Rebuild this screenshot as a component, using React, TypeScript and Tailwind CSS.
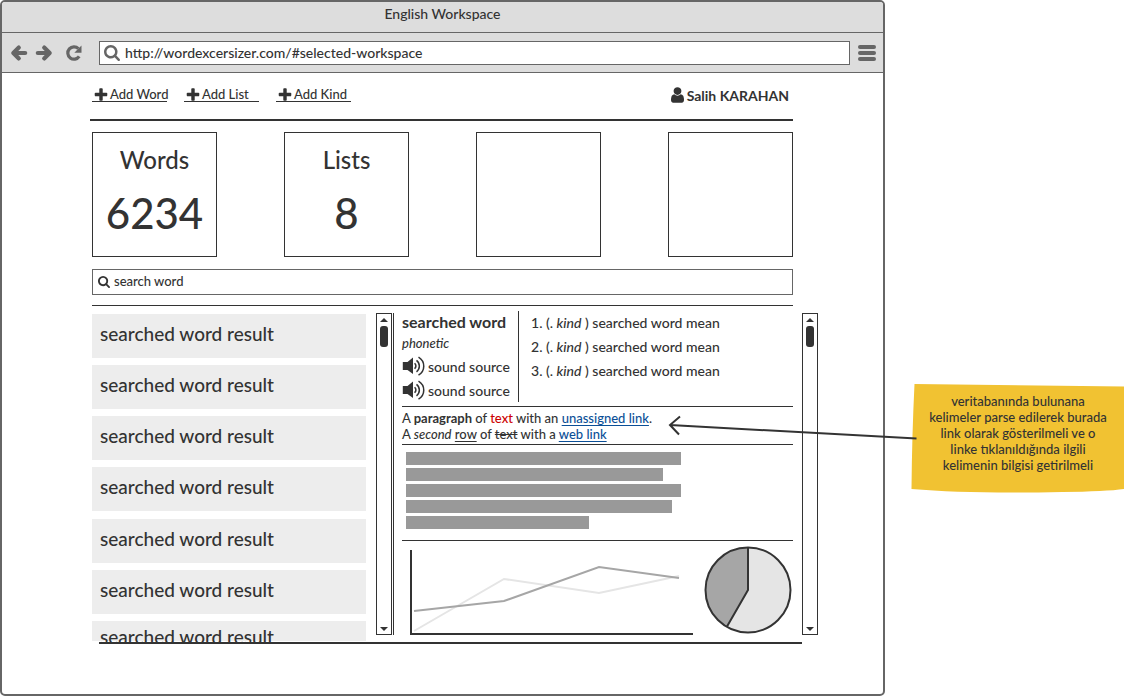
import React from "react";

const PLUS =
  "M1600 736v192q0 40-28 68t-68 28h-416v416q0 40-28 68t-68 28h-192q-40 0-68-28t-28-68v-416h-416q-40 0-68-28t-28-68v-192q0-40 28-68t68-28h416v-416q0-40 28-68t68-28h192q40 0 68 28t28 68v416h416q40 0 68 28t28 68z";
const USER =
  "M1536 1399q0 109-62.5 187t-150.5 78h-854q-88 0-150.5-78t-62.5-187q0-85 8.5-160.5t31.5-152 58.5-131 94-89 134.5-34.5q131 128 313 128t313-128q76 0 134.5 34.5t94 89 58.5 131 31.5 152 8.5 160.5zm-256-887q0 159-112.5 271.5t-271.5 112.5-271.5-112.5-112.5-271.5 112.5-271.5 271.5-112.5 271.5 112.5 112.5 271.5z";
const SEARCH =
  "M1216 832q0-185-131.5-316.5t-316.5-131.5-316.5 131.5-131.5 316.5 131.5 316.5 316.5 131.5 316.5-131.5 131.5-316.5zm512 832q0 52-38 90t-90 38q-54 0-90-38l-343-342q-179 124-399 124-143 0-273.5-55.5t-225-150-150-225-55.5-273.5 55.5-273.5 150-225 225-150 273.5-55.5 273.5 55.5 225 150 150 225 55.5 273.5q0 220-124 399l343 343q37 37 37 90z";

function Glyph({ d, viewBox = "0 0 1792 1792", className }: { d: string; viewBox?: string; className: string }) {
  return (
    <svg viewBox={viewBox} fill="currentColor" className={className} aria-hidden="true">
      <path d={d} />
    </svg>
  );
}

function ArrowIcon({ flip = false }: { flip?: boolean }) {
  return (
    <svg viewBox="0 0 18 18" className={flip ? "size-[18px] rotate-180" : "size-[18px]"} aria-hidden="true">
      <path
        d="M8.800 3.600 3.300 9l5.500 5.400M4 9h11.200"
        fill="none"
        stroke="currentColor"
        strokeWidth="4.200"
        strokeLinecap="round"
        strokeLinejoin="round"
      />
    </svg>
  );
}

function ReloadIcon() {
  return (
    <svg viewBox="0 0 18 18" className="size-[18px]" aria-hidden="true">
      <path d="M15.200 12.400A6.200 6.200 0 1 1 14.400 4.600" fill="none" stroke="currentColor" strokeWidth="3.200" />
      <path d="M17.500 1.500v7.200h-7.200z" fill="currentColor" />
    </svg>
  );
}

function SoundIcon() {
  return (
    <svg viewBox="0 0 24 20" className="h-5 w-6 shrink-0" aria-hidden="true">
      <path d="M.8 6h4.700l5.500-4.500v16.500l-5.500-4H.8z" fill="currentColor" />
      <g fill="none" stroke="currentColor" strokeWidth="1.500">
        <path d="M12.600 7.200q2.600 2.600 0 5.600" />
        <path d="M14.500 4.300c3.800 2.900 3.800 8.600 0 11.500" />
        <path d="M16.500 1.200c7 4.300 7 13.600 0 17.900" />
      </g>
    </svg>
  );
}

function Scrollbar() {
  return (
    <div className="mt-[7px] flex h-[322px] w-4 shrink-0 flex-col items-center border border-[#333] bg-white">
      <button aria-label="Scroll up" className="flex h-3 w-full items-center justify-center">
        <svg viewBox="0 0 8 4" className="h-1 w-2">
          <path d="M0 4 4 0l4 4z" fill="#333" />
        </svg>
      </button>
      <div className="h-[21px] w-2 rounded-[3px] bg-[#333]" />
      <button aria-label="Scroll down" className="mt-auto flex h-[10px] w-full items-center justify-center">
        <svg viewBox="0 0 8 4" className="h-1 w-2">
          <path d="M0 0h8L4 4z" fill="#333" />
        </svg>
      </button>
    </div>
  );
}

function AddLink({ label }: { label: string }) {
  return (
    <a href="#add" className="flex h-[14px] w-[75px] items-center border-b border-[#333] pl-px whitespace-nowrap">
      <Glyph d={PLUS} className="mr-px size-4 shrink-0" />
      {label}
    </a>
  );
}

function Stat({ title, value }: { title?: string; value?: string }) {
  return (
    <div className="flex size-[125px] flex-col items-center border border-[#333] pt-[11px]">
      {title && <h2 className="text-[24px] leading-8">{title}</h2>}
      {value && <p className="pt-[13px] text-[42px] leading-[48px]">{value}</p>}
    </div>
  );
}

function Sound() {
  return (
    <button className="flex h-6 items-center gap-[2px] text-[14px]">
      <SoundIcon />
      sound source
    </button>
  );
}

const results = [1, 2, 3, 4, 5, 6];
const meanings = [1, 2, 3];

function WordPanel() {
  return (
    <article className="ml-2 min-w-0 flex-1">
      <section className="flex border-b border-[#333] pt-[5px] pb-1">
        <div className="w-[116px] shrink-0 whitespace-nowrap">
          <h3 className="text-[16px] leading-[22px] font-bold">searched word</h3>
          <p className="leading-[21px] italic">phonetic</p>
          <Sound />
          <Sound />
        </div>
        <ul className="border-l border-[#333] pl-3 text-[14px] leading-6">
          {meanings.map((n) => (
            <li key={n}>
              {n}. (. <i>kind</i> ) searched word mean
            </li>
          ))}
        </ul>
      </section>
      <p className="border-b border-[#333] pt-[3px] pb-[2px] leading-4 whitespace-nowrap">
        A <b>paragraph</b> of <span className="text-[#cc0000]">text</span> with an{" "}
        <a href="#unassigned" className="text-[#0b4f97] underline underline-offset-2">
          unassigned link
        </a>
        .
        <br />A <i>second</i> <u className="underline-offset-2">row</u> of <s>text</s> with a{" "}
        <a href="#web" className="text-[#0b4f97] underline underline-offset-2">
          web link
        </a>
      </p>
      <div className="flex flex-col gap-[3px] border-b border-[#333] pt-[7px] pb-[11px] pl-1">
        <div className="h-[13px] w-[275px] bg-[#999]" />
        <div className="h-[13px] w-[257px] bg-[#999]" />
        <div className="h-[13px] w-[275px] bg-[#999]" />
        <div className="h-[13px] w-[266px] bg-[#999]" />
        <div className="h-[13px] w-[183px] bg-[#999]" />
      </div>
      <div className="flex items-end justify-between pt-[5px] pl-2">
        <svg viewBox="0 0 283 85" className="h-[85px] w-[283px]" role="img" aria-label="Line chart">
          <g fill="none" strokeWidth="2">
            <path d="M4 81 94 29l95 14 80-17" stroke="#e5e5e5" />
            <path d="M4 61l90-10 95-34 80 11" stroke="#a6a6a6" />
            <path d="M1 0v84h282" stroke="#333" />
          </g>
        </svg>
        <svg viewBox="0 0 90 89" className="h-[89px] w-[90px]" role="img" aria-label="Pie chart">
          <circle cx="45" cy="44" r="42.500" fill="#e5e5e5" />
          <path d="M45 44V1.500A42.500 42.500 0 0 0 24 81z" fill="#a6a6a6" />
          <g fill="none" stroke="#333" strokeWidth="2">
            <circle cx="45" cy="44" r="42.500" />
            <path d="M45 1.500V44L24 80.500" />
          </g>
        </svg>
      </div>
    </article>
  );
}

export default function App() {
  return (
    <div className="flex min-h-screen bg-white font-['Lato','Noto_Sans',sans-serif] text-[13px] font-medium text-[#333]">
      <main className="min-w-0 flex-1 rounded-[5px] border-2 border-[#666] bg-white">
        <header className="rounded-t-[3px] bg-[#ddd]">
          <h1 className="h-[31px] border-b border-[#666] text-center text-[14px] leading-[23px] font-medium">
            English Workspace
          </h1>
          <div className="flex h-10 items-center border-b border-[#666] pr-[7px] pl-2 text-[#666]">
            <button aria-label="Back">
              <ArrowIcon />
            </button>
            <button aria-label="Forward" className="ml-[7px]">
              <ArrowIcon flip />
            </button>
            <button aria-label="Reload" className="ml-[11px]">
              <ReloadIcon />
            </button>
            <label className="ml-[17px] flex h-6 flex-1 items-center border border-[#666] bg-white pl-1">
              <Glyph d={SEARCH} viewBox="64 128 1664 1664" className="size-4 shrink-0" />
              <input
                aria-label="Address"
                defaultValue="http://wordexcersizer.com/#selected-workspace"
                className="ml-[5px] min-w-0 flex-1 bg-transparent text-[14px] text-[#333] outline-none"
              />
            </label>
            <button aria-label="Menu" className="ml-2 flex w-[18px] flex-col gap-[2px]">
              <span className="h-1 rounded-[2px] bg-[#666]" />
              <span className="h-1 rounded-[2px] bg-[#666]" />
              <span className="h-1 rounded-[2px] bg-[#666]" />
            </button>
          </div>
        </header>

        <div className="px-[90px] pb-[50px]">
          <nav className="-ml-[2px] flex h-12 items-start justify-between border-b-2 border-[#333] pt-[15px] pr-1 pl-[2px]">
            <div className="flex gap-[17px]">
              <AddLink label="Add Word" />
              <AddLink label="Add List" />
              <AddLink label="Add Kind" />
            </div>
            <a href="#profile" className="flex h-[14px] items-center gap-[3px] text-[14px] font-bold">
              <Glyph d={USER} viewBox="256 128 1280 1536" className="h-4 w-[13px]" />
              Salih KARAHAN
            </a>
          </nav>

          <div className="mt-[11px] flex justify-between">
            <Stat title="Words" value="6234" />
            <Stat title="Lists" value="8" />
            <Stat />
            <Stat />
          </div>

          <label className="mt-3 flex h-[26px] items-center border border-[#666] pl-[5px]">
            <Glyph d={SEARCH} viewBox="64 128 1664 1664" className="size-3 shrink-0" />
            <input
              aria-label="Search word"
              defaultValue="search word"
              className="ml-1 min-w-0 flex-1 bg-transparent outline-none"
            />
          </label>

          <hr className="mt-[10px] border-[#333]" />

          <div className="mr-[-25px] flex items-start">
            <ul className="mt-2 mr-[10px] flex h-[327px] w-[274px] shrink-0 flex-col justify-between text-[19px]">
              {results.map((n) => (
                <li key={n}>
                  <button className="flex h-11 w-full bg-[#ededed] px-2 pt-2 leading-6">searched word result</button>
                </li>
              ))}
              <li>
                <button className="flex h-5 w-full bg-[#ededed] px-2 pt-1 leading-6">searched word result</button>
              </li>
            </ul>
            <Scrollbar />
            <div className="mt-[7px] ml-px h-[322px] w-px bg-[#333]" />
            <WordPanel />
            <div className="w-[9px] shrink-0" />
            <Scrollbar />
          </div>
          <hr className="mt-px mr-[-9px] ml-[7px] border-t-2 border-[#333]" />
        </div>
      </main>

      <aside className="w-[241px] shrink-0 pt-[384px] pl-[26px]">
        <div className="relative h-[110px] w-[214px]">
          <svg viewBox="0 0 214 110" className="absolute inset-0 size-full" aria-hidden="true">
            <path d="M3.500 0 213 2.500V105q-18 2.500-62 3Q60 110 .5 105 1 50 3.500 0z" fill="#f1c232" />
          </svg>
          <svg
            viewBox="0 0 252 40"
            className="pointer-events-none absolute top-[26px] -left-[246px] h-10 w-[252px]"
            aria-hidden="true"
          >
            <path d="M251.500 28.500 5 15m10-8.500L5 15l9 9.500" fill="none" stroke="#333" strokeWidth="2" />
          </svg>
          <p className="relative pt-[9px] text-center leading-4">
            veritabanında bulunana
            <br />
            kelimeler parse edilerek burada
            <br />
            link olarak gösterilmeli ve o
            <br />
            linke tıklanıldığında ilgili
            <br />
            kelimenin bilgisi getirilmeli
          </p>
        </div>
      </aside>
    </div>
  );
}
